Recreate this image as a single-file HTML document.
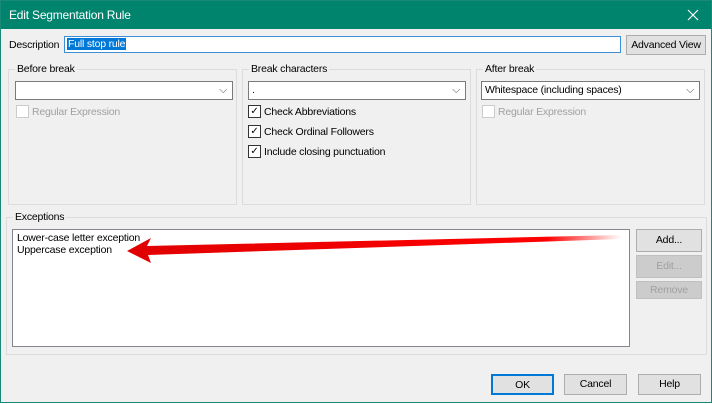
<!DOCTYPE html><html><head><style>
body{margin:0;width:712px;height:403px;overflow:hidden;font-family:"Liberation Sans",sans-serif;font-size:10.5px;letter-spacing:-0.2px;color:#000}
.win{position:absolute;left:0;top:0;width:710px;height:401px;border:1px solid #1a8a78;background:#f0f0f0}
.title{position:absolute;left:0;top:0;width:710px;height:28px;background:#00846e;color:#fff;font-size:12px}
.a{position:absolute;white-space:nowrap}
.box{position:absolute;background:#fff;border:1px solid #7a7a7a;box-sizing:border-box}
.grp{position:absolute;border:1px solid #dcdcdc;box-sizing:border-box}
.lg{position:absolute;top:-7px;left:6px;background:#f0f0f0;padding:0 2px}
.btn{position:absolute;background:#e1e1e1;border:1px solid #adadad;box-sizing:border-box;text-align:center}
.dis{color:#a0a0a0;background:#ccc;border-color:#bfbfbf}
.cb{position:absolute;width:11px;height:11px;border:1px solid #333;background:#fff;font-size:10px;line-height:11px;text-align:center}
.chev{position:absolute;right:5px;top:2px;color:#555}
</style></head><body><div class="win">
<div class="title"><span class="a" style="left:8px;top:7px">Edit Segmentation Rule</span><svg class="a" style="left:686px;top:8px" width="12" height="12"><path d="M1 1L11 11M11 1L1 11" stroke="#fff" stroke-width="1.2"/></svg></div>
<span class="a" style="left:8px;top:38px">Description</span>
<div class="box" style="left:63px;top:35px;width:557px;height:17px;border-color:#3c8fd6"><span class="a" style="left:2px;top:1px;background:#0078d7;color:#fff;padding:0 1px">Full stop rule</span></div>
<div class="btn" style="left:625px;top:34px;width:80px;height:20px;line-height:18px">Advanced View</div>
<div class="grp" style="left:7px;top:68px;width:229px;height:136px"><span class="lg">Before break</span>
<div class="box" style="left:6px;top:11px;width:218px;height:19px"><span class="chev">⌵</span></div>
<div class="cb" style="left:7px;top:35px;border-color:#ccc"></div><span class="a" style="left:23px;top:36px;color:#a0a0a0">Regular Expression</span></div>
<div class="grp" style="left:241px;top:68px;width:229px;height:136px"><span class="lg">Break characters</span>
<div class="box" style="left:5px;top:11px;width:218px;height:19px"><span class="a" style="left:3px;top:2px">.</span><span class="chev">⌵</span></div>
<div class="cb" style="left:5px;top:35px">✓</div><span class="a" style="left:21px;top:36px">Check Abbreviations</span>
<div class="cb" style="left:5px;top:55px">✓</div><span class="a" style="left:21px;top:56px">Check Ordinal Followers</span>
<div class="cb" style="left:5px;top:75px">✓</div><span class="a" style="left:21px;top:76px">Include closing punctuation</span></div>
<div class="grp" style="left:475px;top:68px;width:229px;height:136px"><span class="lg">After break</span>
<div class="box" style="left:4px;top:11px;width:219px;height:19px"><span class="a" style="left:3px;top:2px">Whitespace (including spaces)</span><span class="chev">⌵</span></div>
<div class="cb" style="left:5px;top:35px;border-color:#ccc"></div><span class="a" style="left:21px;top:36px;color:#a0a0a0">Regular Expression</span></div>
<div class="grp" style="left:5px;top:216px;width:701px;height:138px"><span class="lg">Exceptions</span>
<div class="box" style="left:5px;top:11px;width:618px;height:118px;border-color:#828790"><span class="a" style="left:4px;top:2px;line-height:12px">Lower-case letter exception<br>Uppercase exception</span></div>
<div class="btn" style="left:629px;top:11px;width:66px;height:23px;line-height:21px">Add...</div>
<div class="btn dis" style="left:629px;top:37px;width:66px;height:23px;line-height:21px">Edit...</div>
<div class="btn dis" style="left:629px;top:63px;width:66px;height:18px;line-height:16px">Remove</div></div>
<svg class="a" style="left:0;top:0" width="712" height="403"><defs><linearGradient id="g" x1="0" x2="1"><stop offset="0" stop-color="#e00000"/><stop offset=".85" stop-color="#f00"/><stop offset="1" stop-color="#f00" stop-opacity="0"/></linearGradient></defs>
<polygon points="126,250 150,237 146,245 620,234 620,238 147,254 150,262" fill="url(#g)"/></svg>
<div class="btn" style="left:490px;top:373px;width:63px;height:21px;line-height:19px;border:2px solid #0078d7">OK</div>
<div class="btn" style="left:563px;top:373px;width:63px;height:21px;line-height:19px">Cancel</div>
<div class="btn" style="left:637px;top:373px;width:63px;height:21px;line-height:19px">Help</div>
</div></body></html>
